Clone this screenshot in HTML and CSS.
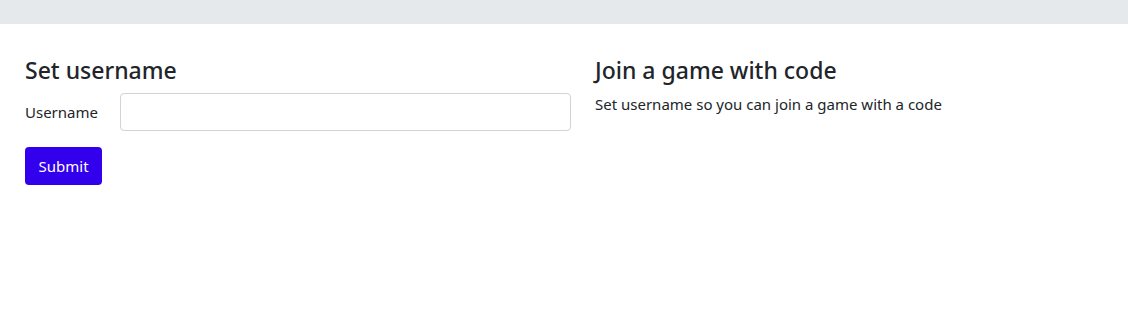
FILE: index.html
```html
<!DOCTYPE html>
<html lang="en">
<head>
    <meta charset="UTF-8">
    <meta name="viewport" content="width=device-width, initial-scale=1.0">
    <title>Game lobby</title>
    <link rel="stylesheet" href="styles.css">
</head>
<body>
    <div class="topbar"></div>
    <div class="page">
        <section class="panel">
            <h4>Set username</h4>
            <form class="username-form" onsubmit="return false;">
                <div class="form-row">
                    <label for="username">Username</label>
                    <input type="text" id="username" class="form-control">
                </div>
                <button type="submit" class="btn-submit">Submit</button>
            </form>
        </section>
        <section class="panel">
            <h4>Join a game with code</h4>
            <p class="join-text">Set username so you can join a game with a code</p>
        </section>
    </div>
</body>
</html>
```

FILE: styles.css
```css
body {
    margin: 0;
    font-family: 'Noto Sans', 'Open Sans', sans-serif;
    font-size: 15px;
    color: #212529;
    background-color: #fff;
}

.topbar {
    height: 24px;
    background-color: #e6e9ec;
}

.page {
    display: grid;
    grid-template-columns: 546px 1fr;
    column-gap: 24px;
    padding: 0 25px;
    margin-top: 33px;
}

h4 {
    margin: 0 0 8px;
    font-size: 23px;
    font-weight: 500;
    line-height: 1.2;
}

p {
    margin: 0;
    line-height: 1.5;
}

.join-text {
    margin-top: 2px;
}

.form-row {
    display: flex;
    align-items: center;
    margin-bottom: 16px;
}

.form-row label {
    width: 95px;
}

.form-control {
    flex: 1;
    height: 38px;
    box-sizing: border-box;
    border: 1px solid #ced4da;
    border-radius: 4px;
    padding: 6px 12px;
    font: inherit;
}

.btn-submit {
    height: 38px;
    padding: 0 13.5px;
    border: none;
    border-radius: 4px;
    background-color: #3300ee;
    color: #fff;
    font: inherit;
    cursor: pointer;
}
```
